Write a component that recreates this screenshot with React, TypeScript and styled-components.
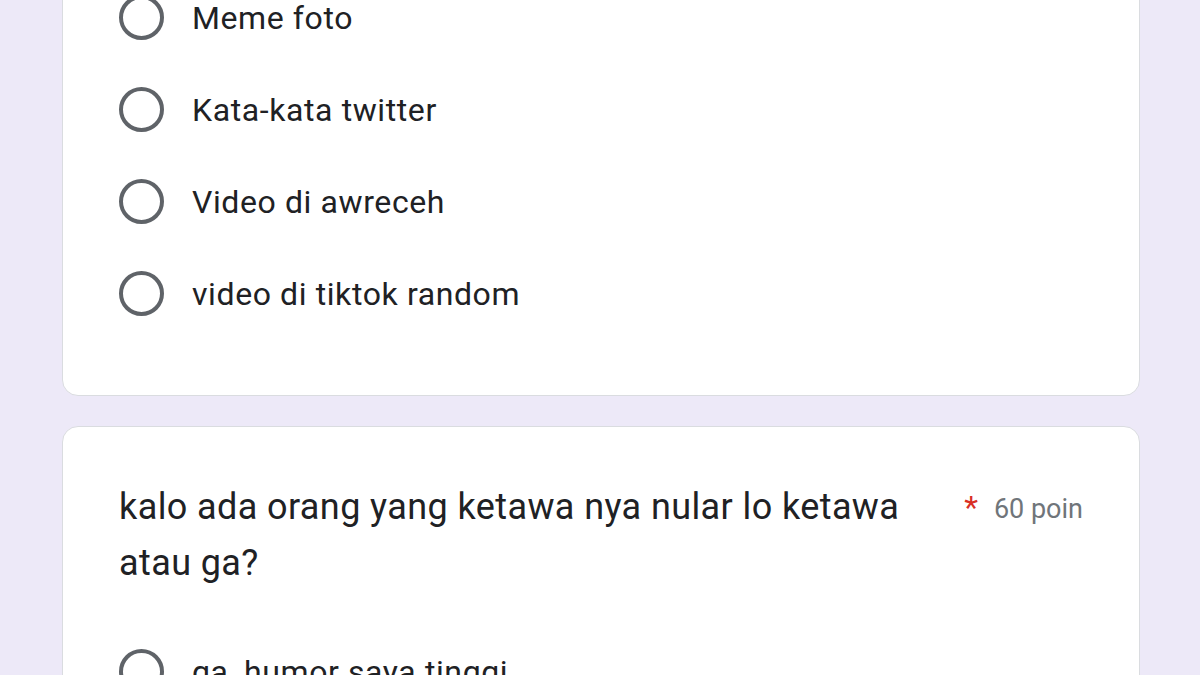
import styled, { createGlobalStyle } from 'styled-components';

const GlobalStyle = createGlobalStyle`
  html, body {
    margin: 0;
    padding: 0;
    background: #ede9f8;
    font-family: Roboto, "Liberation Sans", Arial, sans-serif;
    overflow: hidden;
  }
`;

const Page = styled.div`
  width: 1200px;
  height: 675px;
  overflow: hidden;
  padding: 0 60px 0 62px;
  box-sizing: border-box;
  display: flex;
  flex-direction: column;
  gap: 30px;
`;

const Card = styled.div<{ $cut?: boolean }>`
  background: #fff;
  border: 1px solid #dadce0;
  border-radius: 16px;
  padding: 0 56px;
  padding-top: ${p => (p.$cut ? '24px' : '52px')};
  padding-bottom: ${p => (p.$cut ? '79px' : '0')};
  margin-top: ${p => (p.$cut ? '-30px' : '0')};
  box-sizing: border-box;
  flex-shrink: 0;
`;

const OptionList = styled.div`
  display: flex;
  flex-direction: column;
  gap: 47px;
`;

const Option = styled.label`
  display: flex;
  align-items: center;
  gap: 28px;
  height: 45px;
`;

const Radio = styled.span`
  width: 45px;
  height: 45px;
  border-radius: 50%;
  border: 4px solid #5f6368;
  box-sizing: border-box;
  flex-shrink: 0;
`;

const OptionText = styled.span`
  font-size: 32px;
  color: #202124;
  letter-spacing: 0.6px;
`;

const QuestionHeader = styled.div`
  display: flex;
  align-items: flex-start;
  gap: 40px;
`;

const QuestionTitle = styled.div`
  flex: 1;
  font-size: 36px;
  line-height: 56px;
  letter-spacing: 0.4px;
  color: #202124;
`;

const Points = styled.div`
  display: flex;
  align-items: baseline;
  gap: 16px;
  font-size: 27px;
  line-height: 56px;
  color: #70757a;
  white-space: nowrap;
`;

const Required = styled.span`
  color: #d93025;
  font-size: 32px;
`;

const SecondOptions = styled(OptionList)`
  margin-top: 58px;
`;

const firstOptions = ['Meme foto', 'Kata-kata twitter', 'Video di awreceh', 'video di tiktok random'];

export default function App() {
  return (
    <>
      <GlobalStyle />
      <Page>
        <Card $cut>
          <OptionList>
            {firstOptions.map(o => (
              <Option key={o}>
                <Radio />
                <OptionText>{o}</OptionText>
              </Option>
            ))}
          </OptionList>
        </Card>
        <Card>
          <QuestionHeader>
            <QuestionTitle>kalo ada orang yang ketawa nya nular lo ketawa atau ga?</QuestionTitle>
            <Points>
              <Required>*</Required>
              60 poin
            </Points>
          </QuestionHeader>
          <SecondOptions>
            <Option>
              <Radio />
              <OptionText>ga, humor saya tinggi</OptionText>
            </Option>
            <Option>
              <Radio />
              <OptionText>iya</OptionText>
            </Option>
          </SecondOptions>
        </Card>
      </Page>
    </>
  );
}
